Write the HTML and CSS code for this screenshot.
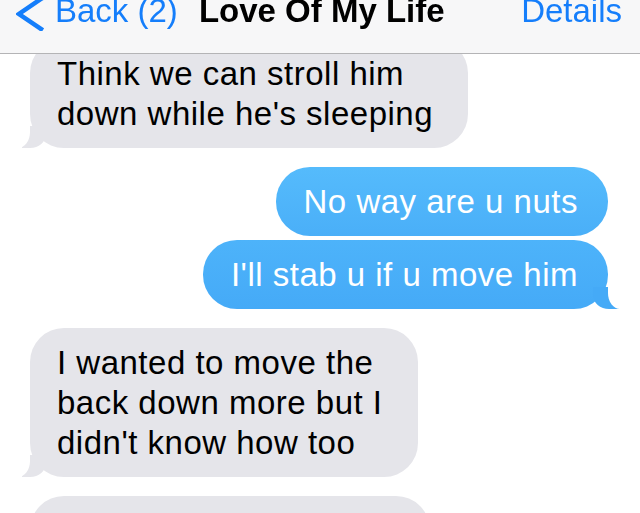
FILE: index.html
```html
<!DOCTYPE html>
<html lang="en">
<head>
    <meta charset="UTF-8">
    <meta name="viewport" content="width=device-width, initial-scale=1.0">
    <title>Love Of My Life</title>
    <link rel="stylesheet" href="styles.css">
</head>
<body>

    <div class="navbar">
        <div class="nav-row">
            <a class="back" href="#">
                <svg class="chevron" width="28" height="38" viewBox="0 0 28 38">
                    <polyline points="25,6 3,21 25,36" fill="none" stroke="#157efb" stroke-width="4.5" stroke-linecap="square" stroke-linejoin="miter"/>
                </svg>
                <span>Back (2)</span>
            </a>
            <span class="title">Love Of My Life</span>
            <a class="details" href="#">Details</a>
        </div>
    </div>

    <div class="messages">
        <div class="bubble them">Think we can stroll him<br>down while he's sleeping</div>

        <div class="bubble me">No way are u nuts</div>
        <div class="bubble me last">I'll stab u if u move him</div>

        <div class="bubble them">I wanted to move the<br>back down more but I<br>didn't know how too</div>

        <div class="bubble them partial">&nbsp;</div>
    </div>

</body>
</html>
```

FILE: styles.css
```css
body {
    font-family: "Liberation Sans", Arial, sans-serif;
    background-color: #fff;
    margin: 0;
    padding: 0;
    overflow: hidden;
}
a {
    text-decoration: none;
}

/* top bar sits over the conversation */
.navbar {
    position: fixed;
    top: 0;
    left: 0;
    right: 0;
    height: 53px;
    background-color: #f7f7f8;
    border-bottom: 1px solid #b4b4b6;
    z-index: 10;
}
.nav-row {
    display: flex;
    align-items: flex-start;
    margin-top: -6px;
    padding-left: 16px;
    padding-right: 18px;
    font-size: 33px;
    line-height: 33px;
}
.back {
    display: flex;
    align-items: flex-start;
    color: #157efb;
}
.chevron {
    margin-top: -1px;
    margin-right: 11px;
}
.title {
    margin-left: 21px;
    font-weight: bold;
    color: #000;
}
.details {
    margin-left: auto;
    color: #157efb;
}

.messages {
    display: flex;
    flex-direction: column;
    padding-top: 39px;
}
.bubble {
    position: relative;
    max-width: 420px;
    padding: 15px 35px 14px 27px;
    margin-bottom: 19px;
    border-radius: 34px;
    font-size: 33px;
    line-height: 40px;
    letter-spacing: 0.5px;
}
.them {
    align-self: flex-start;
    margin-left: 30px;
    background-color: #e5e5ea;
    color: #000;
}
.them::before {
    content: "";
    position: absolute;
    left: -8px;
    bottom: 0;
    width: 24px;
    height: 22px;
    background-color: #e5e5ea;
    border-bottom-right-radius: 16px 14px;
}
.them::after {
    content: "";
    position: absolute;
    left: -26px;
    bottom: 0;
    width: 26px;
    height: 22px;
    background-color: #fff;
    border-bottom-right-radius: 12px 16px;
}
.me {
    align-self: flex-end;
    margin-right: 32px;
    padding: 15px 30px 14px 28px;
    margin-bottom: 4px;
    background: linear-gradient(#55bbfc, #4aaff8);
    color: #fff;
}
.me.last {
    margin-bottom: 19px;
    background: linear-gradient(#4db3fa, #45aaf7);
}
.me.last::before {
    content: "";
    position: absolute;
    right: -11px;
    bottom: 0;
    width: 26px;
    height: 22px;
    background-color: #45aaf7;
    border-bottom-left-radius: 16px 14px;
}
.me.last::after {
    content: "";
    position: absolute;
    right: -26px;
    bottom: 0;
    width: 26px;
    height: 22px;
    background-color: #fff;
    border-bottom-left-radius: 12px 16px;
}
.partial {
    width: 338px;
    height: 80px;
}
```
